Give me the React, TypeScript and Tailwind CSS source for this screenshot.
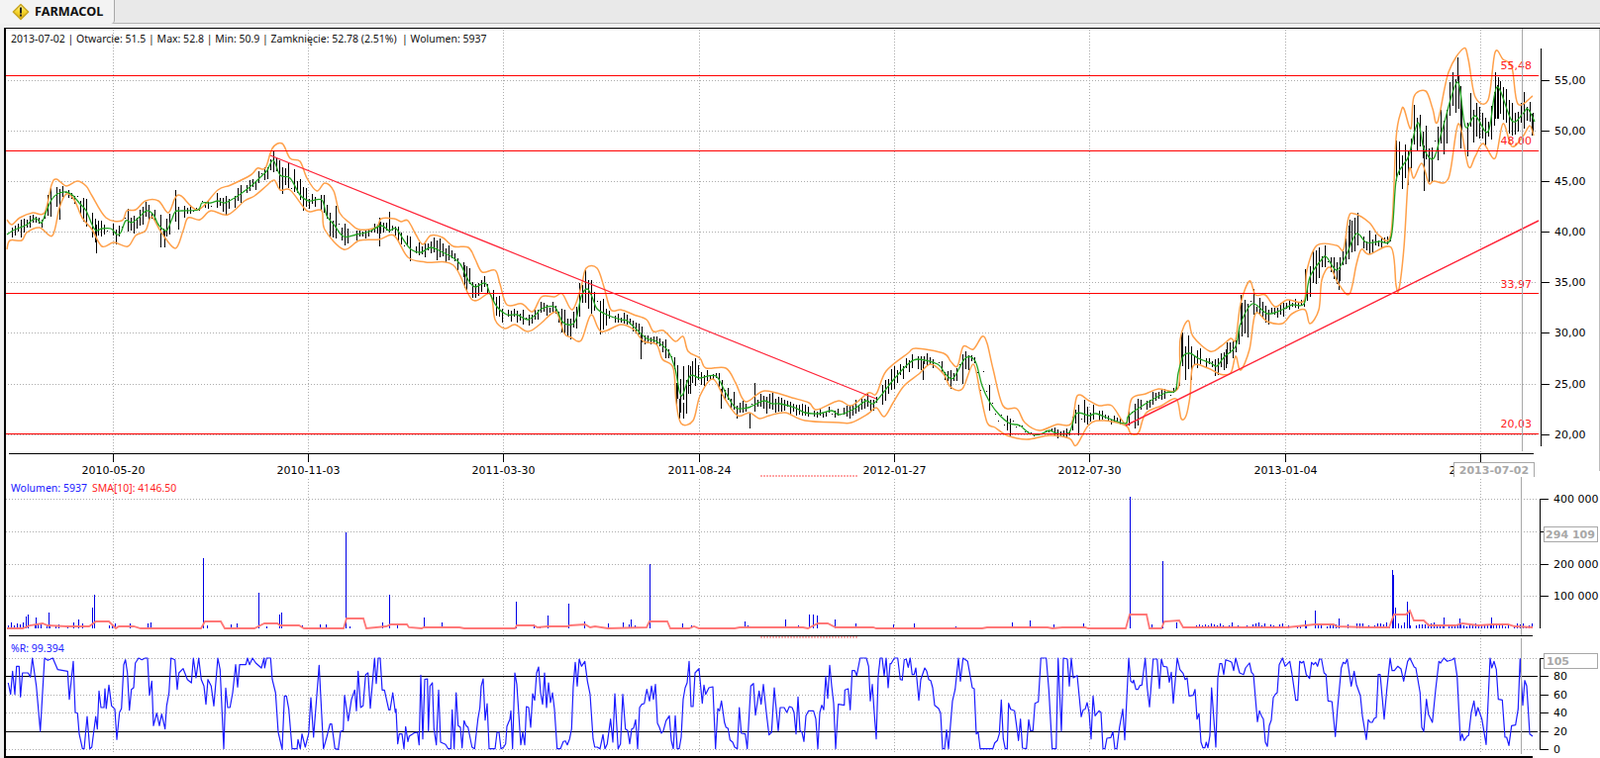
import React from "react";

// traced from the chart, page coordinates
const GREEN = "7,237 13,233 20,230 27,227 33,222 37,221 42,225 47,213 52,202 58,196 67,194 73,197 80,205 87,213 93,227 97,233 103,231 112,231 118,237 122,235 127,223 133,225 140,220 148,213 155,217 160,227 168,233 173,223 177,214 183,213 200,212 204,205 213,205 220,203 227,205 237,200 247,193 257,185 265,177 270,172 276,162 283,177 293,180 303,197 312,203 325,202 330,218 338,228 347,239 360,237 373,234 385,228 393,233 400,231 408,243 415,252 425,255 435,250 447,255 457,260 465,267 473,283 480,290 490,286 495,297 502,310 512,318 522,318 533,323 542,317 547,312 560,310 568,325 577,328 582,322 587,300 593,292 598,300 603,312 613,318 627,323 633,324 643,333 653,342 663,345 675,355 682,373 688,400 697,380 707,382 723,380 733,397 743,412 755,412 760,410 772,405 780,408 788,408 803,412 813,417 827,418 840,415 848,419 863,413 875,405 882,408 892,397 903,383 917,368 927,363 947,368 955,378 963,382 975,362 985,365 992,390 1000,407 1010,420 1020,428 1030,430 1040,438 1050,439 1060,435 1067,438 1080,437 1087,418 1100,420 1107,418 1120,423 1137,428 1140,420 1157,408 1177,397 1187,395 1190,377 1195,360 1202,357 1210,362 1223,367 1229,370 1237,360 1248,350 1253,327 1265,307 1280,317 1295,313 1305,308 1317,307 1323,280 1335,262 1340,260 1350,273 1360,257 1370,236 1380,245 1393,244 1405,240 1410,183 1417,167 1423,157 1432,124 1438,150 1448,160 1457,130 1472,83 1480,128 1490,117 1503,133 1512,88 1527,122 1538,115 1543,110 1550,123";
const UPPER = "7,222 12,227 20,220 33,215 45,215 52,187 57,181 67,188 78,183 87,188 93,198 107,220 123,223 128,213 137,212 147,203 160,203 170,215 177,200 183,198 200,212 220,192 233,187 253,177 260,170 268,170 275,150 285,145 293,160 303,163 310,180 320,193 328,185 337,193 343,215 353,225 363,232 380,230 385,221 398,221 405,224 412,223 420,237 427,247 435,238 447,240 458,249 473,250 480,262 487,275 500,273 505,287 512,308 527,307 538,315 547,300 560,300 568,297 578,313 587,290 592,271 603,271 610,290 617,313 627,313 640,318 653,323 660,335 670,334 682,345 690,340 695,355 707,362 713,372 733,372 743,387 753,406 772,395 800,402 817,407 825,414 847,405 860,410 877,397 885,398 895,375 917,357 925,352 953,357 960,365 967,370 973,350 983,353 992,340 997,347 1003,373 1013,410 1027,413 1035,427 1050,435 1067,429 1082,428 1088,400 1100,405 1110,410 1123,410 1137,428 1143,403 1157,398 1170,393 1190,392 1192,343 1200,324 1205,340 1222,355 1233,350 1243,342 1248,343 1253,307 1262,284 1268,298 1278,298 1288,310 1300,303 1317,304 1320,273 1330,248 1350,248 1357,252 1362,220 1368,216 1383,225 1393,238 1405,235 1410,140 1415,113 1418,110 1425,130 1428,98 1440,92 1447,110 1452,123 1463,73 1478,49 1483,60 1490,98 1503,101 1510,53 1518,60 1527,68 1533,105 1548,97";
const LOWER = "7,252 10,243 22,243 27,235 40,230 53,238 60,210 67,196 75,202 83,220 93,232 103,249 115,245 129,249 137,238 147,233 153,219 163,235 177,251 185,233 190,220 202,222 213,213 230,217 247,203 257,198 270,187 277,182 283,192 293,192 307,210 313,214 325,213 328,232 347,252 363,243 383,242 398,238 412,260 430,265 458,268 477,303 495,297 500,323 510,332 520,328 533,335 545,328 557,317 563,317 570,337 577,341 587,344 597,318 607,335 627,328 640,333 650,345 663,348 669,363 680,372 683,407 688,428 700,425 707,400 720,383 732,403 745,420 757,417 767,423 777,420 793,417 813,425 847,427 860,427 877,418 885,412 893,421 902,407 913,390 928,378 940,368 953,378 960,391 972,393 983,368 990,397 997,427 1005,432 1017,440 1037,444 1060,440 1080,443 1087,450 1100,429 1115,425 1137,430 1142,438 1150,437 1157,418 1173,410 1188,403 1193,423 1198,420 1202,400 1205,370 1220,372 1232,378 1243,377 1248,360 1253,374 1262,353 1268,317 1280,325 1295,327 1305,317 1318,313 1323,327 1332,313 1335,283 1343,270 1352,287 1363,297 1370,267 1375,252 1383,257 1405,250 1410,288 1413,292 1418,250 1423,173 1428,180 1436,165 1443,185 1448,183 1463,180 1473,125 1483,168 1490,158 1498,145 1510,160 1518,125 1527,148 1538,138 1545,127 1549,137";
const SMA = "7,635 23,635 30,632 43,630 48,632 67,633 90,633 97,628 110,628 117,635 120,633 135,633 142,635 203,635 207,628 223,628 227,635 257,635 267,630 280,630 283,632 302,632 307,635 347,635 350,625 367,625 370,635 390,633 395,631 411,631 413,634 426,635 428,634 464,634 469,635 520,635 522,632 539,632 543,634 553,633 573,633 576,632 591,631 596,634 601,633 614,635 653,634 656,628 674,628 677,635 696,635 701,633 706,635 742,635 747,634 793,634 811,634 816,635 826,630 836,630 844,634 882,634 885,635 992,635 997,634 1058,634 1063,635 1073,634 1096,634 1099,635 1137,635 1141,621 1158,621 1161,635 1173,635 1176,628 1191,627 1195,634 1260,634 1300,634 1328,631 1347,631 1350,633 1380,634 1403,634 1408,621 1420,621 1424,617 1428,627 1438,627 1443,632 1470,632 1477,630 1493,632 1508,631 1523,631 1530,633 1548,634";
const SPIKES = [[26,623],[28,621],[36,624],[49,619],[79,626],[93,614],[95,601],[205,564],[261,599],[282,621],[284,619],[349,538],[393,601],[428,624],[446,629],[521,608],[553,622],[574,610],[590,628],[637,626],[656,570],[752,628],[793,626],[817,621],[821,621],[825,622],[843,626],[864,630],[1022,629],[1040,627],[1141,502],[1174,567],[1188,629],[1318,627],[1328,617],[1352,625],[1406,576],[1407,581],[1409,614],[1421,608],[1423,619],[1458,624],[1474,625],[1506,624]];

// the long bars that stand out in the price chart
const LONG = [[97,227,256],[60,203,222],[162,223,250],[166,233,250],[383,220,249],[393,214,233],[469,268,291],[647,337,363],[683,387,409],[686,403,423],[690,407,423],[695,369,398],[697,370,398],[728,393,413],[757,417,433],[762,387,412],[932,365,384],[1193,338,363],[1238,353,372],[1253,298,328],[1318,272,297],[1352,273,293],[1363,222,248],[1410,142,183],[1428,106,130],[1438,147,193],[1472,58,82],[1475,87,150],[1510,73,120],[1513,78,120],[1539,93,130],[1547,115,137]];

// %R raw trace in 3x crop pixels, per crop
const R_A = "25,810 32,845 38,775 45,845 50,760 58,760 62,853 68,780 85,780 92,793 98,735 110,820 122,957 135,735 145,742 160,735 175,770 205,775 210,860 222,745 228,900 235,902 240,965 250,1010 255,1010 264,912 272,1010 278,1005 290,912 295,950 300,835 306,885 315,885 318,828 322,888 330,817 338,880 348,890 354,982 362,900 368,888 375,755 380,740 386,780 392,893 398,830 405,825 410,750 420,735 430,740 440,735 447,735 453,848 460,805 465,940 475,902 483,940 490,905 500,950 505,880 512,840 518,735 530,740 537,830 542,780 555,767 568,800 580,810 586,735 594,795 602,735 610,800 618,820 624,875 630,800 640,820 648,880 660,735 667,770 678,1010 684,826 690,885 697,885 705,840 714,755 720,823 726,755 745,755 750,735 756,755 765,735 775,750 792,765 800,735 802,765 808,735 820,735 825,800 835,840 843,960 855,1012 862,850 868,850 875,890 885,1010 900,1010 903,982 910,1010 915,965 925,1005 935,965 942,855 950,975 967,757 980,1010 990,975 1000,935 1005,935 1015,1010 1025,1012 1032,957 1040,955 1044,848 1055,925 1065,860 1075,832 1080,895 1085,775 1093,885 1100,880 1108,785 1115,780 1122,887 1135,735 1140,812 1146,735 1152,735 1158,832 1165,832 1178,892 1182,892 1190,840 1198,900";
const R_B = "0,230 5,335 10,305 18,305 24,350 29,283 36,328 40,312 55,302 65,300 70,338 75,127 81,320 87,140 95,138 98,297 103,160 110,150 115,290 122,338 129,172 135,330 150,337 158,350 166,350 170,232 176,350 182,180 188,280 195,285 200,347 206,265 212,280 218,285 230,345 238,350 248,260 254,225 258,160 264,138 270,263 276,213 282,350 300,350 306,300 312,300 318,350 326,345 332,335 336,282 345,260 348,235 353,350 360,120 366,155 378,338 384,300 390,338 395,222 402,225 408,285 414,183 420,203 426,120 432,102 438,180 444,215 450,120 456,225 462,150 468,210 474,180 480,230 488,350 498,350 507,328 513,326 519,338 526,320 532,290 537,160 543,88 549,160 555,78 562,100 572,85 580,145 588,185 597,320 602,345 610,345 618,350 627,307 633,350 640,335 650,260 657,330 663,183 673,350 680,335 687,185 695,290 702,295 708,335 714,290 720,287 726,262 732,350 738,225 745,215 752,213 760,170 768,205 774,160 780,200 786,155 792,272 798,285 804,303 810,295 818,265 828,250 834,325 840,350 846,250 852,350 858,350 864,315 870,200 876,165 882,150 888,85 894,222 900,222 906,120 918,107 928,212 933,157 938,185 948,165 960,162 968,350 975,228 980,235 986,205 995,270 1000,285 1006,288 1012,323 1020,330 1026,345 1034,350 1040,225 1046,303 1058,305 1064,350 1075,160 1083,152 1089,248 1100,175 1106,215 1113,155 1122,240 1130,308 1138,300 1146,165 1158,296 1164,225 1176,225 1184,240 1192,222 1200,225 1206,240 1212,305 1218,193 1224,295 1230,300 1236,328 1242,250 1250,235 1265,235 1272,260 1278,350 1284,240 1290,218 1296,232 1302,130 1308,197 1314,97 1320,160 1326,212 1332,350 1340,215 1358,218 1360,172 1370,168 1376,232 1382,113 1390,113 1396,128 1406,75 1425,75 1432,100 1437,205 1443,155 1449,240 1455,320 1461,130 1467,75 1473,75 1479,128 1485,75 1491,165 1497,92";
const R_C = "0,92 10,75 20,75 28,140 34,142 40,80 46,78 52,103 58,75 64,125 70,125 75,105 84,203 90,140 102,105 108,115 114,140 120,143 126,165 132,218 144,228 150,242 156,350 162,350 168,293 174,350 186,205 194,170 204,75 210,145 218,75 232,85 240,130 246,165 252,168 258,305 264,300 270,350 308,350 314,332 322,325 328,305 334,202 340,320 346,350 352,350 356,212 362,230 374,235 380,280 386,325 392,260 398,348 410,350 417,262 422,295 430,295 436,212 446,208 454,75 470,75 478,170 488,350 500,350 506,75 516,297 522,75 534,78 540,160 546,75 552,135 564,128 576,253 582,232 588,230 594,210 600,240 606,320 612,190 618,250 630,235 636,240 642,350 648,350 654,318 666,316 672,298 678,350 684,350 692,285 702,230 708,323 720,75 726,145 732,150 735,142 742,170 748,170 754,158 760,157 770,75 776,165 783,223 794,78 806,78 813,167 819,78 825,100 836,102 843,148 849,118 855,212 867,75 875,110 885,122 891,140 897,135 903,190 915,188 921,170 927,260 933,243 939,330 945,347 951,347 955,330 960,347 966,310 971,165 984,345 990,135 996,92 1002,92 1008,125 1014,80 1026,85 1032,88 1038,113 1044,75 1056,120 1068,125 1074,105 1086,90 1092,118 1098,125 1110,268 1116,235 1122,250 1128,260 1134,330 1140,343 1146,280 1152,263 1158,195 1164,185 1170,180 1176,95 1186,75 1194,100 1208,85 1215,125 1226,203 1232,203 1238,85 1244,90 1250,85 1258,125 1268,137 1274,88 1280,95 1286,88 1292,100 1298,78 1304,78 1312,120 1318,125 1324,205 1336,207 1346,313 1352,235 1364,105 1370,88 1376,92 1382,78 1394,160 1403,115 1410,155 1422,190 1428,250 1440,322 1446,262 1452,270 1458,270 1464,258 1470,255 1476,125 1482,125 1494,260";
const R_D = "302,830 312,735 318,773 325,773 335,760 345,768 353,805 365,745 372,735 385,762 390,765 403,840 408,945 414,958 422,860 428,905 440,930 450,830 460,745 465,750 475,735 485,745 500,740 507,735 515,790 525,985 530,965 536,985 545,972 550,970 558,900 566,865 572,910 578,885 590,920 603,997 615,735 620,765 627,745 634,770 640,860 652,862 660,975 665,975 672,1000 680,940 692,938 700,890 706,737 714,878 720,803 726,820 735,965 744,972";

const parse = (s: string) => s.split(" ").map((p) => p.split(",").map(Number));
const crop = (s: string, ox: number, oy: number) =>
  parse(s).map(([x, y]) => `${(ox + x / 3).toFixed(1)},${(oy + y / 3).toFixed(1)}`).join(" ");
const R_LINE = [crop(R_A, 0, 420), crop(R_B, 400, 640), crop(R_C, 900, 640), crop(R_D, 1300, 420)].join(" ");

// rounds the traced corners off, the bands in the chart are smooth curves
function smooth(s: string) {
  const p = parse(s);
  let d = `M${p[0][0]} ${p[0][1]}`;
  for (let i = 0; i < p.length - 1; i++) {
    const a = p[Math.max(i - 1, 0)];
    const b = p[i];
    const c = p[i + 1];
    const e = p[Math.min(i + 2, p.length - 1)];
    const c1x = b[0] + (c[0] - a[0]) / 6;
    const c1y = b[1] + (c[1] - a[1]) / 6;
    const c2x = c[0] - (e[0] - b[0]) / 6;
    const c2y = c[1] - (e[1] - b[1]) / 6;
    d += `C${c1x.toFixed(1)} ${c1y.toFixed(1)} ${c2x.toFixed(1)} ${c2y.toFixed(1)} ${c[0]} ${c[1]}`;
  }
  return d;
}

const at = (pts: number[][], x: number) => {
  for (let i = 1; i < pts.length; i++) {
    if (x <= pts[i][0]) {
      const [x0, y0] = pts[i - 1];
      const [x1, y1] = pts[i];
      return y0 + ((y1 - y0) * (x - x0)) / (x1 - x0);
    }
  }
  return pts[pts.length - 1][1];
};

function makeRand(seed: number) {
  let s = seed;
  return () => {
    s = (s * 16807) % 2147483647;
    return s / 2147483647;
  };
}

function buildBars() {
  const rand = makeRand(4711);
  const g = parse(GREEN);
  const u = parse(UPPER);
  const l = parse(LOWER);
  let d = LONG.map(([x, a, b]) => `M${x}.5 ${a}V${b}`).join("");
  for (let x = 9; x < 1550; x += 3) {
    const mid = at(g, x);
    const band = at(l, x) - at(u, x);
    const r = rand();
    const thin = x > 985 && x < 1060;
    if (r < 0.06) continue;
    if (r < 0.13 || (thin && r < 0.85)) {
      const y = Math.round(mid + (rand() - 0.5) * band * 0.5);
      d += `M${x}.5 ${y}v1`;
      continue;
    }
    const half = Math.min(band * (0.14 + rand() * 0.24), 17);
    const c = mid + (rand() - 0.45) * band * 0.3;
    d += `M${x}.5 ${Math.round(c - half)}V${Math.round(c + half)}`;
  }
  return d;
}

function buildVolume() {
  const rand = makeRand(1234);
  let d = SPIKES.map(([x, y]) => `M${x}.5 ${y}V635`).join("");
  for (let x = 8; x < 1548; x += 3) {
    const density = x < 120 ? 0.5 : x < 1000 ? 0.12 : x < 1200 ? 0.1 : x < 1380 ? 0.7 : 0.95;
    if (rand() < density) d += `M${x}.5 ${Math.round(635 - 2 - rand() * 4)}V635`;
  }
  return d;
}

const BARS = buildBars();
const VOLUME = buildVolume();

const GRID_X = [114.5, 311.5, 508.5, 706.5, 903.5, 1100.5, 1298.5, 1495.5];
const DATES = ["2010-05-20", "2010-11-03", "2011-03-30", "2011-08-24", "2012-01-27", "2012-07-30", "2013-01-04", "2013-06-05"];
const PRICES = [[81.5, "55,00"], [132.5, "50,00"], [183.5, "45,00"], [234.5, "40,00"], [285.5, "35,00"], [336.5, "30,00"], [388.5, "25,00"], [439.5, "20,00"]] as const;
const LEVELS = [[76.5, "55,48", 67], [152.5, "48,00", 143], [296.5, "33,97", 288], [438.5, "20,03", 429]] as const;
const VOLS = [[504.5, "400 000"], [570.5, "200 000"], [602.5, "100 000"]] as const;
const RTICKS = [[683.5, "80"], [702.5, "60"], [720.5, "40"], [739.5, "20"], [757.5, "0"]] as const;

const DOT = "#adadad";
const AXIS_FONT = "DejaVu Sans, sans-serif";

function PriceChart() {
  return (
    <svg width={1612} height={454} viewBox="4 28 1612 454" fontFamily={AXIS_FONT} fontSize={11} className="block">
      <g stroke={DOT} strokeDasharray="1 2" shapeRendering="crispEdges">
        {PRICES.map(([y]) => <line key={y} x1={5} x2={1553} y1={y} y2={y} />)}
        {GRID_X.map((x) => <line key={x} x1={x} x2={x} y1={30} y2={458} />)}
      </g>
      <path d={BARS} stroke="#000" fill="none" shapeRendering="crispEdges" />
      <g fill="none" stroke="#ffa04a" strokeWidth={1.5} strokeLinejoin="round">
        <path d={smooth(UPPER)} />
        <path d={smooth(LOWER)} />
      </g>
      <path d={smooth(GREEN)} fill="none" stroke="#22a322" strokeWidth={1.3} strokeLinejoin="round" />
      {LEVELS.map(([y, label, ty]) => (
        <g key={label}>
          <line x1={5} x2={1554} y1={y} y2={y} stroke="#ff0000" shapeRendering="crispEdges" />
          <text x={1547} y={ty} textAnchor="end" fill="#ff2020" dominantBaseline="middle">{label}</text>
        </g>
      ))}
      <line x1={273} y1={157} x2={885} y2={403} stroke="#ff2438" strokeWidth={1.2} />
      <line x1={1137} y1={430} x2={1554} y2={223} stroke="#ff2438" strokeWidth={1.4} />
      <line x1={1537.5} x2={1537.5} y1={29} y2={456} stroke="#a8a8a8" strokeWidth={1} />

      {/* price axis */}
      <g stroke="#000" shapeRendering="crispEdges">
        <line x1={1556.5} x2={1556.5} y1={49} y2={451} />
        {PRICES.map(([y]) => <line key={y} x1={1557} x2={1565} y1={y} y2={y} />)}
        <line x1={9} x2={1549} y1={458.5} y2={458.5} />
        {GRID_X.map((x) => <line key={x} x1={x} x2={x} y1={459} y2={467} />)}
      </g>
      {PRICES.map(([y, label]) => (
        <text key={label} x={1570} y={y + 0.5} fill="#000" dominantBaseline="middle">{label}</text>
      ))}
      {DATES.map((d, i) => (
        <text key={d} x={GRID_X[i]} y={476} textAnchor="middle" fill="#000" dominantBaseline="middle">{d}</text>
      ))}
      <line x1={768} x2={867} y1={481} y2={481} stroke="#ff8a8a" strokeWidth={1.5} strokeDasharray="2 1" />
      <line x1={1615.5} x2={1615.5} y1={29} y2={476} stroke="#bdbdbd" />

      {/* cursor date */}
      <rect x={1468.5} y={467.5} width={81} height={20} fill="#fff" stroke="#a8a8a8" />
      <text x={1509} y={476} textAnchor="middle" fill="#a8a8a8" fontWeight={700} dominantBaseline="middle">2013-07-02</text>
    </svg>
  );
}

function VolumeChart() {
  return (
    <svg width={1612} height={160} viewBox="4 482 1612 160" fontFamily={AXIS_FONT} fontSize={11} className="block">
      <g stroke={DOT} strokeDasharray="1 2" shapeRendering="crispEdges">
        {[504.5, 537.5, 570.5, 602.5].map((y) => <line key={y} x1={6} x2={1552} y1={y} y2={y} />)}
        {GRID_X.map((x) => <line key={x} x1={x} x2={x} y1={484} y2={642} />)}
      </g>
      <path d={VOLUME} stroke="#0000e6" fill="none" shapeRendering="crispEdges" />
      <polyline points={SMA} fill="none" stroke="#ff7878" strokeWidth={1.8} />
      <line x1={1536.5} x2={1536.5} y1={482} y2={642} stroke="#a8a8a8" />
      <g stroke="#000" shapeRendering="crispEdges">
        <line x1={1555.5} x2={1555.5} y1={504} y2={635} />
        {[504.5, 537.5, 570.5, 602.5].map((y) => <line key={y} x1={1556} x2={1564} y1={y} y2={y} />)}
      </g>
      {VOLS.map(([y, label]) => (
        <text key={label} x={1569} y={y + 0.5} fill="#000" dominantBaseline="middle">{label}</text>
      ))}
      <rect x={1559.5} y={532.5} width={54} height={15} fill="#fff" stroke="#a8a8a8" />
      <text x={1586} y={540.5} textAnchor="middle" fill="#a8a8a8" fontWeight={700} dominantBaseline="middle">294 109</text>
    </svg>
  );
}

function RChart() {
  return (
    <svg width={1612} height={124} viewBox="4 642 1612 124" fontFamily={AXIS_FONT} fontSize={11} className="block">
      <line x1={9} x2={1548} y1={642.5} y2={642.5} stroke="#000" shapeRendering="crispEdges" />
      <line x1={768} x2={867} y1={644} y2={644} stroke="#ff8a8a" strokeWidth={1.5} strokeDasharray="2 1" />
      <g stroke={DOT} strokeDasharray="1 2" shapeRendering="crispEdges">
        {[665.5, 702.5, 720.5, 757.5].map((y) => <line key={y} x1={6} x2={1552} y1={y} y2={y} />)}
        {GRID_X.map((x) => <line key={x} x1={x} x2={x} y1={645} y2={762} />)}
      </g>
      <line x1={5} x2={1553} y1={683.5} y2={683.5} stroke="#000" shapeRendering="crispEdges" />
      <line x1={5} x2={1553} y1={739.5} y2={739.5} stroke="#000" shapeRendering="crispEdges" />
      <polyline points={R_LINE} fill="none" stroke="#1c1cff" strokeWidth={1.2} strokeLinejoin="round" />
      <line x1={1536.5} x2={1536.5} y1={645} y2={762} stroke="#a8a8a8" />
      <g stroke="#000" shapeRendering="crispEdges">
        <line x1={1555.5} x2={1555.5} y1={665} y2={758} />
        {[665.5, 683.5, 702.5, 720.5, 739.5, 757.5].map((y) => <line key={y} x1={1556} x2={1564} y1={y} y2={y} />)}
      </g>
      {RTICKS.map(([y, label]) => (
        <text key={label} x={1569} y={y + 0.5} fill="#000" dominantBaseline="middle">{label}</text>
      ))}
      <rect x={1559.5} y={660.5} width={54} height={15} fill="#fff" stroke="#a8a8a8" />
      <text x={1562} y={668.5} fill="#a8a8a8" fontWeight={700} dominantBaseline="middle">105</text>
      <rect x={5} y={764} width={1543} height={2} fill="#000" />
    </svg>
  );
}

function WarnIcon() {
  return (
    <svg width={18} height={18} viewBox="0 0 18 18">
      <defs>
        <linearGradient id="warn" x1="0" y1="0" x2="0" y2="1">
          <stop offset="0" stopColor="#fff6a8" />
          <stop offset="0.5" stopColor="#f7d52c" />
          <stop offset="1" stopColor="#d7a90c" />
        </linearGradient>
      </defs>
      <path d="M9 1.5 16.6 9 9 16.5 1.4 9Z" fill="url(#warn)" stroke="#c9a620" strokeLinejoin="round" strokeWidth={1.6} />
      <rect x={8} y={4.5} width={2} height={6} fill="#222" />
      <rect x={8} y={11.5} width={2} height={2} fill="#222" />
    </svg>
  );
}

export default function App() {
  return (
    <div className="w-[1616px] h-[766px] overflow-hidden flex flex-col bg-[#f0f0f0]">
      <div className="h-[28px] shrink-0">
        <div className="h-[24px] bg-[#e9e9e9] border-b border-[#b4b4b4] flex">
          <div className="w-[116px] h-[24px] bg-[#f3f3f3] border-r border-[#a8a8a8] rounded-br-sm flex items-center pl-[12px] gap-[5px]">
            <WarnIcon />
            <span className="font-['Liberation_Sans',sans-serif] font-bold text-[12.7px] text-[#111]">FARMACOL</span>
          </div>
        </div>
      </div>
      <div className="flex-1 ml-[4px] bg-white relative">
        <div className="absolute left-[7px] top-[4px] font-['Noto_Sans',sans-serif] text-[10.5px] leading-[14px] text-[#111] whitespace-pre">
          2013-07-02 | Otwarcie: 51.5 | Max: 52.8 | Min: 50.9 | Zamknięcie: 52.78 (2.51%)  | Wolumen: 5937
        </div>
        <div className="absolute left-[7px] top-[458px] flex gap-[5px] font-['Noto_Sans',sans-serif] text-[10.5px] leading-[14px] whitespace-pre">
          <span className="text-[#2020ff]">Wolumen: 5937</span>
          <span className="text-[#ff1f1f]">SMA[10]: 4146.50</span>
        </div>
        <div className="absolute left-[7px] top-[620px] font-['Noto_Sans',sans-serif] text-[10.5px] leading-[14px] text-[#2020ff]">
          %R: 99.394
        </div>
        <div className="absolute left-0 top-0 bottom-0 w-[1.5px] bg-black" />
        <div className="absolute left-0 right-0 top-0 h-[1px] bg-black" />
        <PriceChart />
        <VolumeChart />
        <RChart />
      </div>
    </div>
  );
}
